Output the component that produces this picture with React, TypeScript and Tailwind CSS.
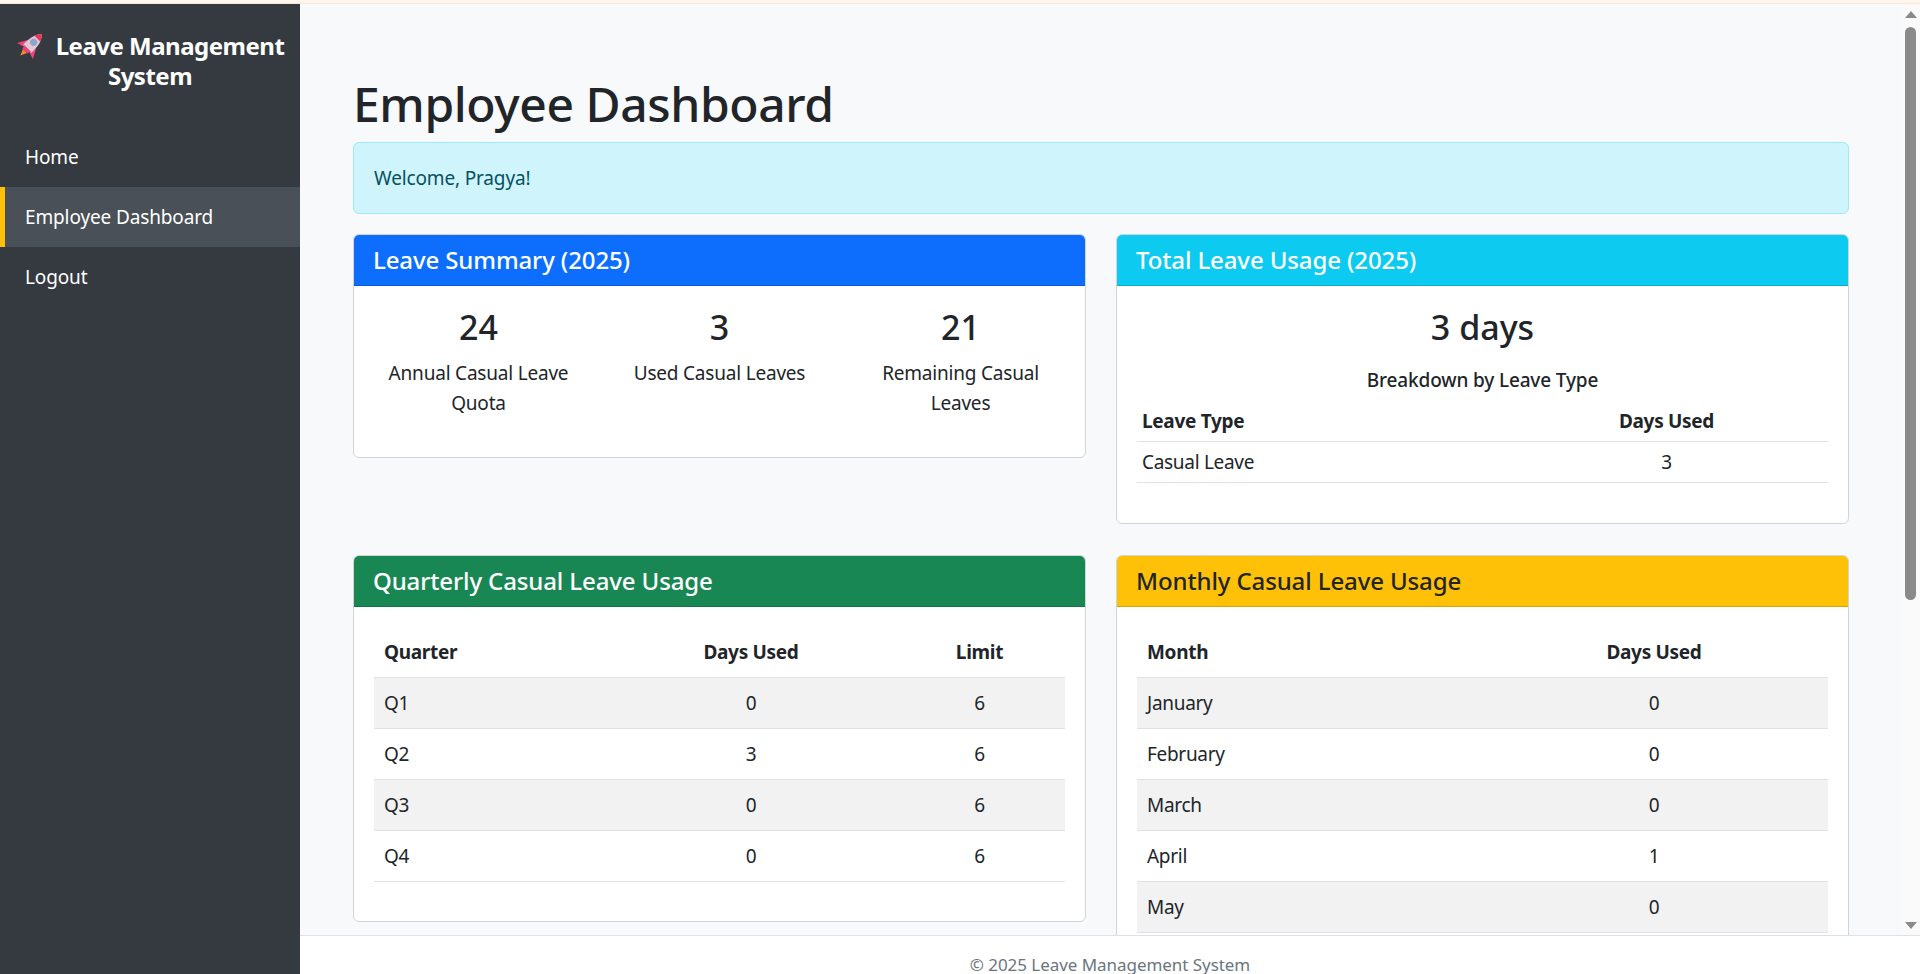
const font = { fontFamily: '"Noto Sans", "Open Sans", sans-serif' };

function Rocket() {
  return (
    <svg viewBox="0 0 32 32" className="inline-block w-[30px] h-[30px] align-[-5px] mr-[10px] overflow-visible">
      <g transform="rotate(45 16 16) translate(0 -1)">
        <path d="M13 26h6l-3 7z" fill="#f08a2c" />
        <path d="M10 15 4 26l7-2zM22 15l6 11-7-2z" fill="#f0427a" />
        <path d="M16 1c5 4 6.500 12 6 22H10C9.500 13 11 5 16 1z" fill="#dcccd6" />
        <path d="M16 1c2 1.600 3.500 4 4.400 6.500h-8.800C12.500 5 14 2.600 16 1z" fill="#ef3358" />
        <path d="M11 22h10l-1.500 4.500h-7z" fill="#f0427a" />
        <circle cx="16" cy="13" r="3.200" fill="#7ea9dc" stroke="#a99bb8" strokeWidth="1.200" />
      </g>
    </svg>
  );
}

function Card({ title, headerClass, className = "", children }: { title: string; headerClass: string; className?: string; children: React.ReactNode }) {
  return (
    <div className={"rounded-[6px] border border-[#d3d4d5] bg-white overflow-hidden " + className}>
      <div className={"h-[51px] px-[19px] flex items-center text-[24px] font-medium tracking-[-0.12px] border-b border-black/15 " + headerClass}>{title}</div>
      <div className="p-[20px]">{children}</div>
    </div>
  );
}

function Stat({ value, label }: { value: string; label: string }) {
  return (
    <div className="text-center px-[12px]">
      <div className="text-[34px] leading-[38px] font-medium text-[#212529] mt-[2px] mb-[12px]">{value}</div>
      <div className="text-[19px] leading-[30px] text-[#212529] tracking-[-0.2px]">{label}</div>
    </div>
  );
}

function DataTable({ head, rows, cols }: { head: string[]; rows: string[][]; cols: string }) {
  return (
    <div className="text-[19px] text-[#212529] tracking-[-0.3px] mb-[19px]">
      <div className={"grid h-[51px] items-center font-bold border-b border-[#dee2e6] px-[10px] " + cols}>
        {head.map((h, i) => <div key={h} className={i === 0 ? "" : "text-center"}>{h}</div>)}
      </div>
      {rows.map((r, ri) => (
        <div key={r[0]} className={"grid h-[51px] items-center border-b border-[#dee2e6] px-[10px] " + cols + (ri % 2 === 0 ? " bg-[#f2f2f2]" : " bg-white")}>
          {r.map((c, i) => <div key={i} className={i === 0 ? "" : "text-center"}>{c}</div>)}
        </div>
      ))}
    </div>
  );
}

export default function App() {
  return (
    <div style={font} className="h-[974px] w-[1920px] overflow-hidden flex flex-col bg-white">
      <div className="h-[4px] bg-[#fef6ef] border-b border-[#fbe6d6] shrink-0" />
      <div className="flex flex-1 min-h-0">
        <aside className="w-[300px] shrink-0 bg-[#343a40] text-white">
          <div className="pt-[26px] px-[10px] text-center text-[24px] leading-[30px] font-bold tracking-[-0.5px] h-[123px]"><Rocket />Leave Management System</div>
          <nav className="text-[19px] tracking-[-0.13px]">
            <div className="h-[60px] flex items-center pl-[25px]">Home</div>
            <div className="h-[60px] flex items-center pl-[20px] border-l-[5px] border-[#ffc107] bg-[#495057]">Employee Dashboard</div>
            <div className="h-[60px] flex items-center pl-[25px]">Logout</div>
          </nav>
        </aside>
        <div className="flex-1 min-w-0 flex flex-col">
          <main className="relative h-[931px] shrink-0 overflow-hidden bg-[#f8f9fa] pl-[53px] pr-[71px] pt-[71px]">
            <h1 className="text-[48px] leading-[58px] font-medium text-[#212529] tracking-[-0.4px] mb-[9px]">Employee Dashboard</h1>
            <div className="h-[72px] rounded-[6px] border border-[#9eeaf9] bg-[#cff4fc] text-[#055160] flex items-center px-[20px] pt-[1px] text-[19px] tracking-[-0.15px] mb-[20px]">Welcome, Pragya!</div>
            <div className="grid grid-cols-2 gap-x-[30px] gap-y-[31px] items-start">
              <Card title="Leave Summary (2025)" headerClass="bg-[#0d6efd] text-white">
                <div className="grid grid-cols-3 h-[131px] -mx-[16px]">
                  <Stat value="24" label="Annual Casual Leave Quota" />
                  <Stat value="3" label="Used Casual Leaves" />
                  <Stat value="21" label="Remaining Casual Leaves" />
                </div>
              </Card>
              <Card title="Total Leave Usage (2025)" headerClass="bg-[#0dcaf0] text-white">
                <div className="text-center text-[34px] leading-[38px] font-medium text-[#212529] mt-[2px] mb-[20px]">3 days</div>
                <div className="text-center text-[19px] leading-[28px] font-medium text-[#212529] tracking-[-0.15px] mb-[7px]">Breakdown by Leave Type</div>
                <div className="text-[19px] text-[#212529] tracking-[-0.3px] mb-[20px]">
                  <div className="grid grid-cols-[1fr_313px] h-[41px] items-center font-bold border-b border-[#dee2e6] px-[5px]"><div>Leave Type</div><div className="text-center">Days Used</div></div>
                  <div className="grid grid-cols-[1fr_313px] h-[41px] items-center border-b border-[#dee2e6] px-[5px]"><div>Casual Leave</div><div className="text-center">3</div></div>
                </div>
              </Card>
              <Card title="Quarterly Casual Leave Usage" headerClass="bg-[#198754] text-white">
                <DataTable cols="grid-cols-[213px_308px_149px]" head={["Quarter", "Days Used", "Limit"]} rows={[["Q1", "0", "6"], ["Q2", "3", "6"], ["Q3", "0", "6"], ["Q4", "0", "6"]]} />
              </Card>
              <Card title="Monthly Casual Leave Usage" headerClass="bg-[#ffc107] text-[#212529]" className="h-[500px]">
                <DataTable cols="grid-cols-[1fr_328px]" head={["Month", "Days Used"]} rows={[["January", "0"], ["February", "0"], ["March", "0"], ["April", "1"], ["May", "0"]]} />
              </Card>
            </div>
            <div className="absolute right-0 top-0 bottom-0 w-[19px] bg-[#fafafa]">
              <div className="absolute left-[4px] top-[7px] w-0 h-0 border-x-[6px] border-x-transparent border-b-[7px] border-b-[#8a8a8a]" />
              <div className="absolute left-[4px] top-[23px] w-[11px] h-[573px] rounded-full bg-[#8a8a8a]" />
              <div className="absolute left-[4px] bottom-[6px] w-0 h-0 border-x-[6px] border-x-transparent border-t-[7px] border-t-[#8a8a8a]" />
            </div>
          </main>
          <footer className="border-t border-[#dee2e6] bg-white text-center text-[#6c757d] text-[17px] tracking-[-0.05px] pt-[16px]">© 2025 Leave Management System</footer>
        </div>
      </div>
    </div>
  );
}
